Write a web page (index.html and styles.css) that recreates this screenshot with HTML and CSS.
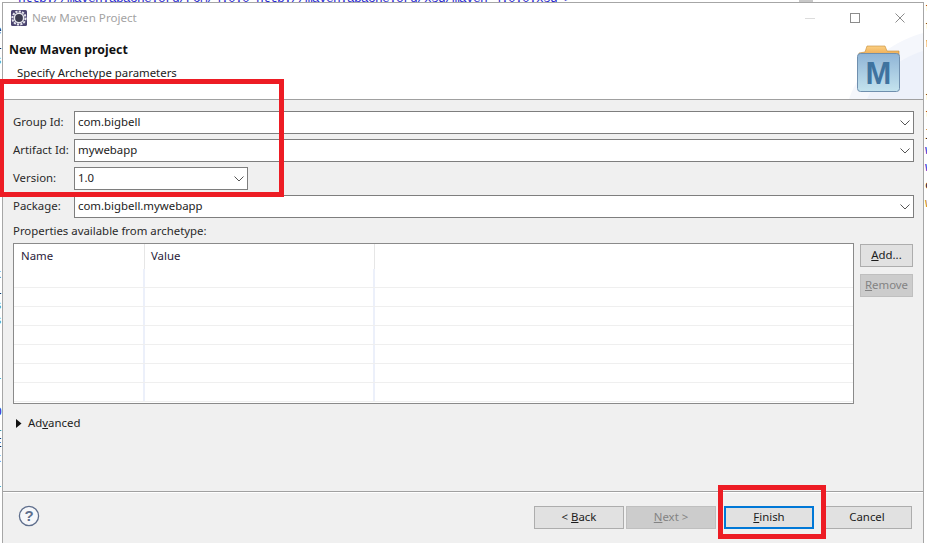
FILE: index.html
```html
<!DOCTYPE html>
<html lang="en">
<head>
<meta charset="utf-8">
<title>New Maven Project</title>
<link rel="stylesheet" href="styles.css">
</head>
<body>
<div class="backdrop">
  <div class="code-top">http://maven.apache.org/POM/4.0.0 http://maven.apache.org/xsd/maven-4.0.0.xsd"&gt;</div>
  <div class="code-sel"></div>
  <pre class="strip strip-left">


<span class="k">e</span>
<span class="k">l</span>
<span class="c">s</span>













<span class="k">t</span>
<span class="k">L</span>
<span class="c">s</span>
<span class="c">s</span>



<span class="c">r</span>

<span class="b">D</span>
<span class="c">l</span>
<span class="k">E</span>
<span class="b">t</span>

<span class="c">r</span></pre>
  <pre class="strip strip-right"><span class="r">t</span>
<span class="k">t</span>
<span class="r">r</span>


<span class="k">t</span>
<span class="r">t</span>
<span class="k">j</span>
<span class="b">w</span>
<span class="b">w</span>
<span class="k">c</span>
<span class="o">w</span></pre>
</div>

<main class="window">
  <header class="head">
    <svg class="head-swoosh" width="74" height="66" viewBox="0 0 74 66">
      <path d="M0 66C10 36 38 10 74 0V66Z" fill="#f5f7fc"/>
      <path d="M18 66C28 44 48 26 74 18V66Z" fill="#edf1fa"/>
    </svg>
    <div class="titlebar">
      <svg class="app-icon" width="16" height="16" viewBox="0 0 16 16">
        <rect width="16" height="16" rx="1.5" fill="#4b4470"/>
        <circle cx="8" cy="8" r="6.6" fill="none" stroke="#e8e8ee" stroke-width="2" stroke-dasharray="2.2 1.2"/>
        <circle cx="8" cy="8" r="5.4" fill="#e8e8ee"/>
        <circle cx="8" cy="8" r="3.9" fill="#3c3c50"/>
      </svg>
      <span class="win-title">New Maven Project</span>
      <div class="win-controls">
        <svg width="10" height="10" viewBox="0 0 10 10"><path d="M0 5.5H10" stroke="#dcdcdc"/></svg>
        <svg width="10" height="10" viewBox="0 0 10 10"><rect x=".5" y=".5" width="9" height="9" fill="none" stroke="#8c8c8c"/></svg>
        <svg width="10" height="10" viewBox="0 0 10 10"><path d="M.5 .5L9.5 9.5M9.5 .5L.5 9.5" stroke="#8c8c8c"/></svg>
      </div>
    </div>
    <div class="banner">
      <div class="banner-text">
        <h1>New Maven project</h1>
        <p>Specify Archetype parameters</p>
      </div>
      <svg class="maven-logo" width="44" height="47" viewBox="0 0 44 47">
        <defs>
          <linearGradient id="fold" x1="0" y1="0" x2="0" y2="1">
            <stop offset="0" stop-color="#8fb4d6"/>
            <stop offset="1" stop-color="#c4e3ee"/>
          </linearGradient>
          <linearGradient id="tab" x1="0" y1="0" x2="0" y2="1">
            <stop offset="0" stop-color="#fbd083"/>
            <stop offset="1" stop-color="#eda64c"/>
          </linearGradient>
        </defs>
        <path d="M2 8L8 7L10 1H28L30 6H42V11H2Z" fill="url(#tab)" stroke="#c48b35" stroke-width=".6"/>
        <rect x=".5" y="8.5" width="42" height="38" rx="3" fill="url(#fold)" stroke="#6f8fae"/>
        <text class="maven-m" x="21.5" y="39" text-anchor="middle">M</text>
      </svg>
    </div>
  </header>

  <section class="body">
    <div class="form-grid">
      <label class="lbl">Group Id:</label>
      <div class="combo"><span>com.bigbell</span><svg class="chev" width="10" height="6" viewBox="0 0 10 6"><path d="M.5 .5L5 5L9.5 .5" fill="none" stroke="#555"/></svg></div>
      <label class="lbl">Artifact Id:</label>
      <div class="combo"><span>mywebapp</span><svg class="chev" width="10" height="6" viewBox="0 0 10 6"><path d="M.5 .5L5 5L9.5 .5" fill="none" stroke="#555"/></svg></div>
      <label class="lbl">Version:</label>
      <div class="combo combo-short"><span>1.0</span><svg class="chev" width="10" height="6" viewBox="0 0 10 6"><path d="M.5 .5L5 5L9.5 .5" fill="none" stroke="#555"/></svg></div>
      <label class="lbl">Package:</label>
      <div class="combo"><span>com.bigbell.mywebapp</span><svg class="chev" width="10" height="6" viewBox="0 0 10 6"><path d="M.5 .5L5 5L9.5 .5" fill="none" stroke="#555"/></svg></div>
    </div>
    <div class="props-label">Properties available from archetype:</div>
    <div class="props">
      <div class="table">
        <div class="thead"><div class="th th-name">Name</div><div class="th th-value">Value</div><div class="th"></div></div>
        <div class="trow trow-first"><i></i><i></i><i></i></div>
        <div class="trow"><i></i><i></i><i></i></div>
        <div class="trow"><i></i><i></i><i></i></div>
        <div class="trow"><i></i><i></i><i></i></div>
        <div class="trow"><i></i><i></i><i></i></div>
        <div class="trow"><i></i><i></i><i></i></div>
        <div class="trow"><i></i><i></i><i></i></div>
      </div>
      <div class="side-btns">
        <button class="btn btn-side"><u>A</u>dd...</button>
        <button class="btn btn-side btn-off"><u>R</u>emove</button>
      </div>
    </div>
    <div class="advanced">
      <svg width="6" height="9" viewBox="0 0 6 9"><path d="M0 0L5.5 4.5L0 9Z" fill="#111"/></svg>
      <span>Ad<u>v</u>anced</span>
    </div>
  </section>

  <footer class="foot">
    <svg class="help" width="22" height="22" viewBox="0 0 22 22">
      <circle cx="11" cy="11" r="9.6" fill="#f6f7fa" stroke="#5e6e8c" stroke-width="1.3"/>
      <text class="help-q" x="11" y="16.2" text-anchor="middle">?</text>
    </svg>
    <div class="foot-btns">
      <button class="btn">&lt; <u>B</u>ack</button>
      <button class="btn btn-off"><u>N</u>ext &gt;</button>
      <button class="btn btn-default"><u>F</u>inish</button>
      <button class="btn">Cancel</button>
    </div>
  </footer>
</main>

<div class="mark mark-fields"></div>
<div class="mark mark-finish"></div>
</body>
</html>
```

FILE: styles.css
```css
* { box-sizing: border-box; }
html, body { margin: 0; padding: 0; }
body {
  width: 927px;
  height: 543px;
  position: relative;
  overflow: hidden;
  background: #fff;
  font-family: "Noto Sans", "Liberation Sans", sans-serif;
  font-size: 11.4px;
  color: #1c1c1c;
}

/* editor showing behind the dialog */
.backdrop { position: absolute; inset: 0; overflow: hidden; }
.code-top {
  position: absolute;
  left: 18px;
  top: -9px;
  font: 13px/16px "Liberation Mono", monospace;
  color: #2a2ad0;
  white-space: pre;
  letter-spacing: -0.8px;
}
.code-sel { position: absolute; left: 799px; top: 0; width: 14px; height: 2px; background: #c8c8c8; }
.strip {
  position: absolute;
  margin: 0;
  font: 13px/17.7px "Liberation Mono", monospace;
  color: #222;
}
.strip-left { left: -6px; top: -8px; line-height: 15.3px; }
.strip-right { left: 925px; top: 0; }
.k { color: #1a1a1a; }
.r { color: #8a1f1f; }
.b { color: #2a2ad0; }
.c { color: #3f8f8f; }
.o { color: #c98a20; }

/* dialog */
.window {
  position: absolute;
  left: 2px;
  top: 2px;
  width: 922px;
  height: 541px;
  border: 1px solid #a6a6a6;
  border-bottom: 0;
  background: #f0f0f0;
  display: flex;
  flex-direction: column;
}
.head {
  position: relative;
  height: 97px;
  background: #fff;
  border-bottom: 1px solid #a0a0a0;
  overflow: hidden;
}
.head-swoosh { position: absolute; right: 0; bottom: 0; }
.titlebar {
  position: relative;
  height: 30px;
  display: flex;
  align-items: center;
  padding: 0 18px 0 8px;
}
.app-icon { margin-right: 5px; }
.win-title { color: #a3a3a3; font-size: 11.6px; margin-top: -2px; }
.win-controls { margin-left: auto; display: flex; gap: 35px; }
.banner { position: relative; display: flex; justify-content: space-between; height: 66px; padding-left: 6px; }
.banner-text { padding-top: 9px; }
.banner h1 { margin: 0; font-size: 12.3px; line-height: 16px; font-weight: 700; color: #111; }
.banner p { margin: 7px 0 0 8px; line-height: 16px; color: #222; }
.maven-logo { margin: 12px 22px 0 0; }
.maven-m { font: 700 31px "Liberation Sans", sans-serif; fill: #3f739f; }

.body { flex: 1; padding: 11px 9px 0 10px; }
.form-grid {
  display: grid;
  grid-template-columns: 61px 1fr;
  grid-auto-rows: 23px;
  row-gap: 5px;
}
.lbl { display: flex; align-items: center; color: #2a2a2a; padding-bottom: 2px; }
.combo {
  display: flex;
  align-items: center;
  justify-content: space-between;
  background: #fff;
  border: 1px solid #7e7e7e;
  padding: 0 3px 0 3px;
  color: #1c1c1c;
}
.combo span { margin-top: -2px; }
.combo-short { width: 174px; }
.chev { flex: none; }
.props-label { height: 16px; margin-top: 5px; line-height: 16px; color: #2a2a2a; }
.props { display: flex; gap: 6px; margin-top: 4px; }
.table {
  width: 841px;
  height: 161px;
  background: #fff;
  border: 1px solid #8a8a8a;
  overflow: hidden;
}
.thead, .trow { display: grid; grid-template-columns: 131px 230px 1fr; }
.thead { height: 25px; }
.th { padding-left: 7px; line-height: 23px; border-right: 1px solid #e6e6e6; color: #2b1c3a; }
.th:last-child { border-right: 0; }
.th-value { padding-left: 6px; }
.trow { height: 19px; border-bottom: 1px solid #efefef; }
.trow i { display: block; border-right: 2px solid #ecf0fa; }
.trow i:last-child { border-right: 0; }
.side-btns { display: flex; flex-direction: column; gap: 7px; padding-top: 1px; }
.btn {
  width: 90px;
  height: 23px;
  padding: 0 0 2px;
  font: inherit;
  color: #1c1c1c;
  background: #e1e1e1;
  border: 1px solid #adadad;
}
.btn-side { width: 53px; }
.btn-off { background: #cccccc; border-color: #bfbfbf; color: #838383; }
.btn-default { border: 2px solid #0078d7; }
.advanced { display: flex; align-items: center; gap: 6px; height: 16px; margin: 11px 0 0 3px; }
.advanced span { color: #1c1c1c; margin-top: -2px; }

.foot {
  height: 52px;
  border-top: 1px solid #a0a0a0;
  box-shadow: inset 0 1px 0 #fff;
  display: flex;
  align-items: flex-start;
  justify-content: space-between;
  padding: 14px 11px 0 15px;
}
.help { margin-top: -1px; }
.help-q { font: 700 15px "Liberation Sans", sans-serif; fill: #5e6e8c; }
.foot-btns { display: flex; gap: 8px; }
.foot-btns .btn:first-child { margin-right: -6px; }

/* red annotations drawn over the screenshot */
.mark { position: absolute; border: 5px solid #ed1c24; pointer-events: none; }
.mark-fields { left: -1px; top: 79px; width: 285px; height: 118px; }
.mark-finish { left: 718px; top: 485px; width: 108px; height: 54px; }
```
